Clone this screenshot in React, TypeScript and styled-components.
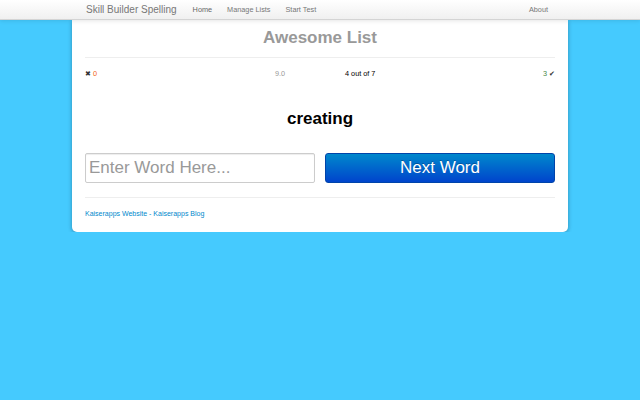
import React from 'react';
import styled, {createGlobalStyle} from 'styled-components';

const GlobalStyle = createGlobalStyle`
  html, body {
    margin: 0;
    padding: 0;
    background: #45cafe;
    font-family: "Liberation Sans", Arial, sans-serif;
  }
`;

const NavBar = styled.div`
  height: 19px;
  background: linear-gradient(#ffffff, #f0f0f0);
  border-bottom: 1px solid #d4d4d4;
  box-shadow: 0 1px 4px rgba(0, 0, 0, 0.1);
  position: relative;
  z-index: 2;
`;

const NavInner = styled.div`
  width: 470px;
  margin: 0 auto;
  height: 100%;
  display: flex;
  align-items: center;
`;

const Brand = styled.span`
  font-size: 10px;
  color: #777;
  margin-left: 1px;
  margin-right: 16px;
`;

const NavLink = styled.a<{$active?: boolean}>`
  font-size: 7.3px;
  color: ${p => (p.$active ? '#666' : '#777')};
  text-decoration: none;
  margin-right: 15px;
  &:last-child {
    margin-left: auto;
    margin-right: 7px;
  }
`;

const Card = styled.div`
  width: 470px;
  margin: 0 auto;
  background: #fff;
  padding: 6px 13px 13px;
  border-radius: 0 0 5px 5px;
  box-shadow: 0 1px 4px rgba(0, 0, 0, 0.3);
`;

const Title = styled.h1`
  margin: 0;
  text-align: center;
  font-size: 17px;
  font-weight: bold;
  color: #999;
  line-height: 24px;
`;

const Rule = styled.hr`
  border: 0;
  border-top: 1px solid #eee;
  margin: 7px 0 0;
`;

const Stats = styled.div`
  display: grid;
  grid-template-columns: 190px 70px auto 1fr;
  align-items: center;
  font-size: 7.3px;
  margin: 11px 0 0;
  line-height: 10px;
`;

const Stat = styled.span<{$color?: string; $align?: string}>`
  color: ${p => p.$color || '#333'};
  text-align: ${p => p.$align || 'left'};
`;

const Num = styled.span<{$color: string}>`
  color: ${p => p.$color};
`;

const Word = styled.h2`
  margin: 30px 0 0;
  text-align: center;
  font-size: 17px;
  font-weight: bold;
  color: #000;
  line-height: 20px;
`;

const InputRow = styled.div`
  display: grid;
  grid-template-columns: 1fr 1fr;
  gap: 10px;
  margin-top: 24px;
`;

const WordInput = styled.input`
  height: 30px;
  box-sizing: border-box;
  border: 1px solid #ccc;
  border-radius: 2px;
  font-family: "Liberation Sans", Arial, sans-serif;
  font-size: 17px;
  padding: 0 3px;
  color: #555;
  box-shadow: inset 0 1px 1px rgba(0, 0, 0, 0.075);
  &::placeholder {
    color: #999;
  }
`;

const NextButton = styled.button`
  height: 30px;
  border: 1px solid #0044aa;
  border-radius: 3px;
  background: linear-gradient(#0088cc, #0044cc);
  color: #fff;
  font-family: "Liberation Sans", Arial, sans-serif;
  font-size: 17px;
  text-shadow: 0 -1px 0 rgba(0, 0, 0, 0.25);
`;

const Footer = styled.div`
  margin-top: 14px;
  padding-top: 11px;
  border-top: 1px solid #eee;
  font-size: 7px;
  color: #0088cc;
  line-height: 10px;
`;

const FooterLink = styled.a`
  color: #0088cc;
  text-decoration: none;
`;

export default function App() {
  return (
    <>
      <GlobalStyle />
      <NavBar>
        <NavInner>
          <Brand>Skill Builder Spelling</Brand>
          <NavLink $active>Home</NavLink>
          <NavLink>Manage Lists</NavLink>
          <NavLink>Start Test</NavLink>
          <NavLink>About</NavLink>
        </NavInner>
      </NavBar>
      <Card>
        <Title>Awesome List</Title>
        <Rule />
        <Stats>
          <Stat>✖ <Num $color="#f26522">0</Num></Stat>
          <Stat $color="#999">9.0</Stat>
          <Stat $color="#000">4 out of 7</Stat>
          <Stat $align="right"><Num $color="#468847">3</Num> ✔</Stat>
        </Stats>
        <Word>creating</Word>
        <InputRow>
          <WordInput placeholder="Enter Word Here..." />
          <NextButton>Next Word</NextButton>
        </InputRow>
        <Footer>
          <FooterLink>Kaiserapps Website</FooterLink> - <FooterLink>Kaiserapps Blog</FooterLink>
        </Footer>
      </Card>
    </>
  );
}
